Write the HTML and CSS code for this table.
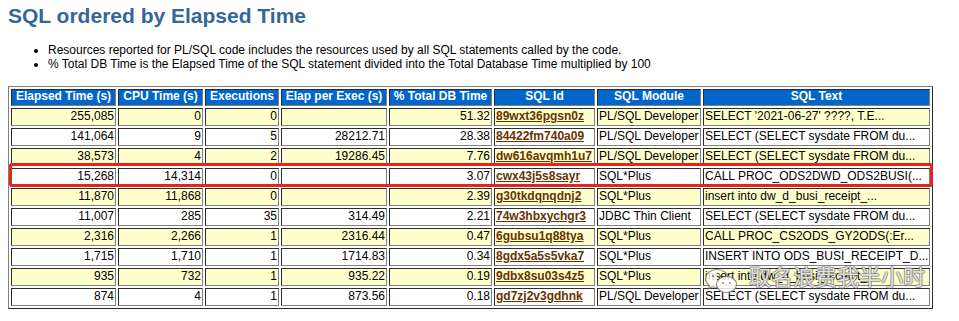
FILE: index.html
```html
<!DOCTYPE html>
<html>
<head>
<meta charset="utf-8">
<title>SQL ordered by Elapsed Time</title>
<link rel="stylesheet" href="styles.css">
</head>
<body>
<h2 class="title">SQL ordered by Elapsed Time</h2>
<ul class="notes">
<li>Resources reported for PL/SQL code includes the resources used by all SQL statements called by the code.</li>
<li>% Total DB Time is the Elapsed Time of the SQL statement divided into the Total Database Time multiplied by 100</li>
</ul>
<div class="report">
<table class="awr">
<colgroup>
<col class="w1"><col class="w2"><col class="w3"><col class="w4"><col class="w5"><col class="w6"><col class="w7"><col class="w8">
</colgroup>
<thead>
<tr><th>Elapsed Time (s)</th><th>CPU Time (s)</th><th>Executions</th><th>Elap per Exec (s)</th><th>% Total DB Time</th><th>SQL Id</th><th>SQL Module</th><th>SQL Text</th></tr>
</thead>
<tbody>
<tr class="c"><td class="num">255,085</td><td class="num">0</td><td class="num">0</td><td class="num"></td><td class="num">51.32</td><td><a href="#">89wxt36pgsn0z</a></td><td>PL/SQL Developer</td><td>SELECT '2021-06-27' ????, T.E...</td></tr>
<tr class="nc"><td class="num">141,064</td><td class="num">9</td><td class="num">5</td><td class="num">28212.71</td><td class="num">28.38</td><td><a href="#">84422fm740a09</a></td><td>PL/SQL Developer</td><td>SELECT (SELECT sysdate FROM du...</td></tr>
<tr class="c"><td class="num">38,573</td><td class="num">4</td><td class="num">2</td><td class="num">19286.45</td><td class="num">7.76</td><td><a href="#">dw616avqmh1u7</a></td><td>PL/SQL Developer</td><td>SELECT (SELECT sysdate FROM du...</td></tr>
<tr class="nc"><td class="num">15,268</td><td class="num">14,314</td><td class="num">0</td><td class="num"></td><td class="num">3.07</td><td><a href="#">cwx43j5s8sayr</a></td><td>SQL*Plus</td><td>CALL PROC_ODS2DWD_ODS2BUSI(...</td></tr>
<tr class="c"><td class="num">11,870</td><td class="num">11,868</td><td class="num">0</td><td class="num"></td><td class="num">2.39</td><td><a href="#">g30tkdqnqdnj2</a></td><td>SQL*Plus</td><td>insert into dw_d_busi_receipt_...</td></tr>
<tr class="nc"><td class="num">11,007</td><td class="num">285</td><td class="num">35</td><td class="num">314.49</td><td class="num">2.21</td><td><a href="#">74w3hbxychgr3</a></td><td>JDBC Thin Client</td><td>SELECT (SELECT sysdate FROM du...</td></tr>
<tr class="c"><td class="num">2,316</td><td class="num">2,266</td><td class="num">1</td><td class="num">2316.44</td><td class="num">0.47</td><td><a href="#">6gubsu1q88tya</a></td><td>SQL*Plus</td><td>CALL PROC_CS2ODS_GY2ODS(:Er...</td></tr>
<tr class="nc"><td class="num">1,715</td><td class="num">1,710</td><td class="num">1</td><td class="num">1714.83</td><td class="num">0.34</td><td><a href="#">8gdx5a5s5vka7</a></td><td>SQL*Plus</td><td>INSERT INTO ODS_BUSI_RECEIPT_D...</td></tr>
<tr class="c"><td class="num">935</td><td class="num">732</td><td class="num">1</td><td class="num">935.22</td><td class="num">0.19</td><td><a href="#">9dbx8su03s4z5</a></td><td>SQL*Plus</td><td>insert into dw_d_busi_receipt_...</td></tr>
<tr class="nc"><td class="num">874</td><td class="num">4</td><td class="num">1</td><td class="num">873.56</td><td class="num">0.18</td><td><a href="#">gd7zj2v3gdhnk</a></td><td>PL/SQL Developer</td><td>SELECT (SELECT sysdate FROM du...</td></tr>
</tbody>
</table>
<div class="highlight"></div>
<div class="watermark">
<svg class="wm-icon" width="34" height="26" viewBox="0 0 34 26">
<path d="M13 1.5C6.4 1.5 1.5 5.6 1.5 10.6c0 2.8 1.5 5.2 3.9 6.9l-1 3.2 3.7-2c1.5.5 3.1.7 4.9.7" fill="rgba(255,255,255,0.8)" stroke="rgba(110,110,110,0.75)" stroke-width="1.2"/>
<path d="M13 1.5c6.1 0 11 3.7 11.4 8.5" fill="none" stroke="rgba(110,110,110,0.75)" stroke-width="1.2"/>
<ellipse cx="22.5" cy="16.5" rx="10" ry="8" fill="rgba(255,255,255,0.85)" stroke="rgba(110,110,110,0.75)" stroke-width="1.2"/>
<circle cx="9" cy="8" r="1.3" fill="rgba(110,110,110,0.7)"/>
<circle cx="16" cy="8" r="1.3" fill="rgba(110,110,110,0.7)"/>
<circle cx="19" cy="15" r="1.1" fill="rgba(110,110,110,0.7)"/>
<circle cx="26" cy="15" r="1.1" fill="rgba(110,110,110,0.7)"/>
</svg>
<span class="wm-text">取名浪费我半小时</span>
</div>
</div>
</body>
</html>
```
FILE: styles.css
```css
html, body {
  margin: 0;
}
body {
  margin: 0 8px;
  font-family: "Liberation Sans", Arial, sans-serif;
  color: #000;
  background: #fff;
}
.title {
  margin: 4px 0 0;
  font-size: 21px;
  line-height: 24px;
  font-weight: bold;
  color: #336699;
}
.notes {
  margin: 15px 0;
  padding-left: 40px;
  font-size: 12px;
  line-height: 14px;
}
.report {
  position: relative;
}
.awr {
  box-sizing: border-box;
  width: 925px;
  table-layout: fixed;
  border: 1px outset gray;
  border-spacing: 2px;
  font-size: 12px;
}
.w1 { width: 105px; }
.w2 { width: 85px; }
.w3 { width: 74px; }
.w4 { width: 106px; }
.w5 { width: 103px; }
.w6 { width: 101px; }
.w7 { width: 104px; }
.w8 { width: 227px; }
.awr th {
  background: #0066cc;
  color: #fff;
  font-weight: bold;
  line-height: 13px;
  padding: 0 2px 2px;
  border: 1px inset gray;
  text-align: center;
  white-space: nowrap;
  overflow: hidden;
}
.awr td {
  line-height: 14px;
  padding: 0 1px 2px;
  border: 1px inset gray;
  white-space: nowrap;
  overflow: hidden;
  vertical-align: top;
}
.awr .num {
  text-align: right;
}
.c td {
  background: #ffffcc;
}
.nc td {
  background: #fff;
}
.awr a {
  color: #663300;
  font-weight: bold;
  text-decoration: underline;
}
.highlight {
  position: absolute;
  left: 1px;
  top: 77px;
  width: 924px;
  height: 24px;
  box-sizing: border-box;
  border: 3px solid #e5231f;
  border-radius: 3px;
}
.watermark {
  position: absolute;
  left: 696px;
  top: 177px;
  display: flex;
  align-items: flex-start;
  gap: 11px;
  pointer-events: none;
}
.wm-icon {
  margin-top: 5px;
}
.wm-text {
  font-family: "Noto Sans CJK SC", sans-serif;
  font-size: 22px;
  line-height: 24px;
  color: rgba(255, 255, 255, 0.8);
  text-shadow: 1px 0 0 rgba(100, 100, 100, 0.6), -1px 0 0 rgba(100, 100, 100, 0.6), 0 1px 0 rgba(100, 100, 100, 0.6), 0 -1px 0 rgba(100, 100, 100, 0.6);
}
```
